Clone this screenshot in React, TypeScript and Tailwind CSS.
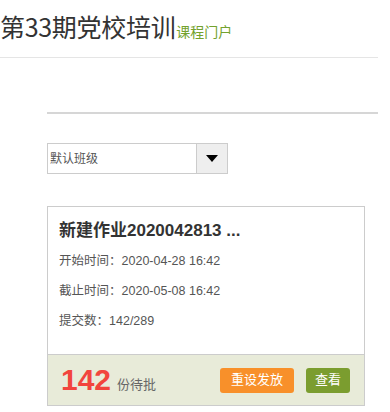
import React from "react";

const cardInfo = [
  { label: "开始时间", value: "2020-04-28 16:42" },
  { label: "截止时间", value: "2020-05-08 16:42" },
  { label: "提交数", value: "142/289" },
];

const App = () => {
  return (
    <div
      className="w-[378px] bg-white text-[#333]"
      style={{ fontFamily: '"Liberation Sans", "Noto Sans CJK SC", sans-serif' }}
    >
      {/* Header */}
      <div className="h-[58px] border-b border-[#e5e5e5] flex items-baseline pt-[6px]">
        <h1
          className="text-[25px] leading-[40px] text-[#333] tracking-[-0.3px]"
          style={{ fontFamily: '"Noto Sans CJK SC", sans-serif' }}
        >
          第33期党校培训
        </h1>
        <span
          className="text-[14px] text-[#73a22e] ml-[1px]"
          style={{ fontFamily: '"Noto Sans CJK SC", sans-serif' }}
        >
          课程门户
        </span>
      </div>

      <div className="pl-[47px]">
        <div className="mt-[54px] h-[2px] bg-[#d6d6d6]" />

        {/* Class select */}
        <div className="mt-[29px] w-[181px] h-[31px] border border-[#ccc] flex">
          <div className="flex-1 flex items-center pl-[2px] text-[12px] text-[#555]">
            默认班级
          </div>
          <div className="w-[31px] bg-[#eee] border-l border-[#ccc] flex items-center justify-center">
            <div className="w-0 h-0 border-l-[6px] border-r-[6px] border-t-[7px] border-l-transparent border-r-transparent border-t-black" />
          </div>
        </div>

        {/* Homework card */}
        <div className="mt-[32px] w-[318px] border border-[#ccc]">
          <div className="pl-[11px] pt-[12px] pb-[24px]">
            <div className="text-[17px] font-bold leading-[24px] text-[#333]">
              新建作业2020042813 ...
            </div>
            <div className="mt-[9px] flex flex-col gap-[12px]">
              {cardInfo.map((item) => (
                <div key={item.label} className="text-[12.5px] leading-[18px] text-[#555]">
                  {item.label}：{item.value}
                </div>
              ))}
            </div>
          </div>
          <div className="h-[51px] border-t border-[#ccc] bg-[#e8ebd9] flex items-center pl-[13px] pr-[14px]">
            <span className="text-[30px] leading-none font-bold text-[#f2453d]">142</span>
            <span className="ml-[6px] mt-[10px] text-[13px] text-[#666]">份待批</span>
            <button className="ml-auto w-[74px] h-[25px] rounded-[3px] bg-[#f8902a] text-white text-[13px]">
              重设发放
            </button>
            <button className="ml-[12px] w-[44px] h-[25px] rounded-[3px] bg-[#7b9d2f] text-white text-[13px]">
              查看
            </button>
          </div>
        </div>
      </div>
    </div>
  );
};

export default App;
